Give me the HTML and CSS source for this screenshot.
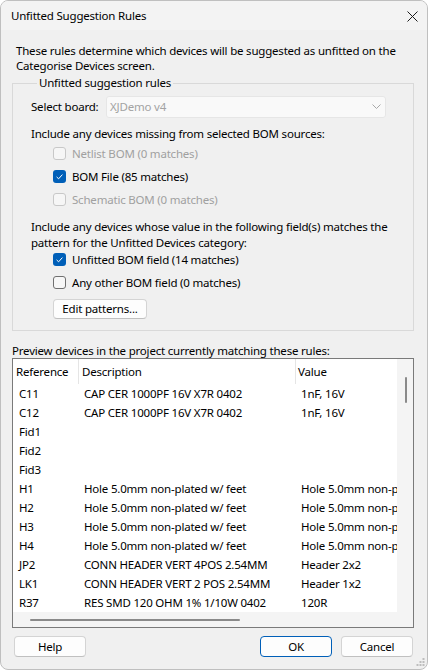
FILE: index.html
```html
<!DOCTYPE html>
<html lang="en">
<head>
<meta charset="utf-8">
<title>Unfitted Suggestion Rules</title>
<link rel="stylesheet" href="styles.css">
</head>
<body>
<div class="window">
  <div class="titlebar">
    <span class="title">Unfitted Suggestion Rules</span>
    <svg class="close" width="11" height="11" viewBox="0 0 11 11"><path d="M0.5 0.5 L10.5 10.5 M10.5 0.5 L0.5 10.5" stroke="#1b1b1b" stroke-width="1" fill="none"/></svg>
  </div>
  <div class="content">
    <p class="intro">These rules determine which devices will be suggested as unfitted on the<br>Categorise Devices screen.</p>
    <fieldset class="group">
      <legend>Unfitted suggestion rules</legend>
      <div class="board-row">
        <span class="board-label">Select board:</span>
        <div class="select">
          <span>XJDemo v4</span>
          <svg width="9" height="5" viewBox="0 0 9 5"><path d="M0.5 0.5 L4.5 4.5 L8.5 0.5" stroke="#a8a8a8" stroke-width="1" fill="none"/></svg>
        </div>
      </div>
      <p class="section s1">Include any devices missing from selected BOM sources:</p>
      <div class="checks">
        <div class="check disabled"><span class="box"></span><span>Netlist BOM (0 matches)</span></div>
        <div class="check"><span class="box on"><svg width="13" height="13" viewBox="0 0 13 13"><path d="M3.6 6.9 L5.6 8.8 L9.4 4.6" stroke="#fff" stroke-width="1" fill="none"/></svg></span><span>BOM File (85 matches)</span></div>
        <div class="check disabled"><span class="box"></span><span>Schematic BOM (0 matches)</span></div>
      </div>
      <p class="section s2">Include any devices whose value in the following field(s) matches the<br>pattern for the Unfitted Devices category:</p>
      <div class="checks c2">
        <div class="check"><span class="box on"><svg width="13" height="13" viewBox="0 0 13 13"><path d="M3.6 6.9 L5.6 8.8 L9.4 4.6" stroke="#fff" stroke-width="1" fill="none"/></svg></span><span>Unfitted BOM field (14 matches)</span></div>
        <div class="check"><span class="box off"></span><span>Any other BOM field (0 matches)</span></div>
      </div>
      <button class="btn edit">Edit patterns...</button>
    </fieldset>
    <p class="preview-label">Preview devices in the project currently matching these rules:</p>
    <div class="list">
      <div class="viewport">
        <div class="row head">
          <span>Reference</span><span>Description</span><span>Value</span>
        </div>
        <div class="row"><span>C11</span><span>CAP CER 1000PF 16V X7R 0402</span><span>1nF, 16V</span></div>
        <div class="row"><span>C12</span><span>CAP CER 1000PF 16V X7R 0402</span><span>1nF, 16V</span></div>
        <div class="row"><span>Fid1</span><span></span><span></span></div>
        <div class="row"><span>Fid2</span><span></span><span></span></div>
        <div class="row"><span>Fid3</span><span></span><span></span></div>
        <div class="row"><span>H1</span><span>Hole 5.0mm non-plated w/ feet</span><span>Hole 5.0mm non-plated w/ feet</span></div>
        <div class="row"><span>H2</span><span>Hole 5.0mm non-plated w/ feet</span><span>Hole 5.0mm non-plated w/ feet</span></div>
        <div class="row"><span>H3</span><span>Hole 5.0mm non-plated w/ feet</span><span>Hole 5.0mm non-plated w/ feet</span></div>
        <div class="row"><span>H4</span><span>Hole 5.0mm non-plated w/ feet</span><span>Hole 5.0mm non-plated w/ feet</span></div>
        <div class="row"><span>JP2</span><span>CONN HEADER VERT 4POS 2.54MM</span><span>Header 2x2</span></div>
        <div class="row"><span>LK1</span><span>CONN HEADER VERT 2 POS 2.54MM</span><span>Header 1x2</span></div>
        <div class="row"><span>R37</span><span>RES SMD 120 OHM 1% 1/10W 0402</span><span>120R</span></div>
      </div>
      <div class="vscroll"><span class="vthumb"></span></div>
      <div class="hscroll"><span class="hthumb"></span></div>
      <div class="corner"></div>
    </div>
    <div class="buttons">
      <button class="btn">Help</button>
      <span class="spacer"></span>
      <button class="btn ok">OK</button>
      <button class="btn">Cancel</button>
    </div>
  </div>
  <svg class="grip" width="10" height="9" viewBox="0 0 10 9">
    <rect x="7.5" y="0" width="2" height="2" fill="#bdbdbd"/>
    <rect x="4.5" y="3" width="2" height="2" fill="#bdbdbd"/>
    <rect x="7.5" y="3" width="2" height="2" fill="#bdbdbd"/>
    <rect x="1.5" y="6" width="2" height="2" fill="#bdbdbd"/>
    <rect x="4.5" y="6" width="2" height="2" fill="#bdbdbd"/>
    <rect x="7.5" y="6" width="2" height="2" fill="#bdbdbd"/>
  </svg>
</div>
</body>
</html>
```

FILE: styles.css
```css
* { box-sizing: border-box; }
html, body { margin: 0; padding: 0; background: #ffffff; }
body {
  font-family: "Noto Sans", "Open Sans", sans-serif;
  font-size: 11.5px;
  letter-spacing: -0.2px;
  line-height: 16px;
  color: #000;
}
p { margin: 0; white-space: nowrap; }

.window {
  position: relative;
  width: 428px;
  height: 670px;
  border: 1px solid #bfbfbf;
  border-radius: 8px;
  background: #f0f0f0;
  display: flex;
  flex-direction: column;
  overflow: hidden;
}

.titlebar {
  height: 29px;
  flex: none;
  display: flex;
  align-items: center;
  justify-content: space-between;
  padding: 0 9px 0 10px;
  background: #f3f3f3;
}
.title { padding-top: 1px; }
.close { display: block; margin-top: 2px; }

.content {
  flex: 1;
  display: flex;
  flex-direction: column;
  padding: 0 13px 0 11px;
}

.intro {
  margin-top: 13px;
  padding-left: 4px;
  line-height: 15px;
}

.group {
  margin: 2px 0 0 0;
  padding: 5px 8px 11px 18px;
  border: 1px solid #d9d9d9;
  display: flex;
  flex-direction: column;
  align-items: flex-start;
  min-width: 0;
}
.group legend {
  margin-left: 6px;
  padding: 0 2px;
  line-height: 16px;
}

.board-row {
  display: flex;
  align-items: center;
  width: 100%;
}
.board-label { width: 75px; flex: none; }
.select {
  width: 280px;
  height: 22px;
  display: flex;
  align-items: center;
  justify-content: space-between;
  padding: 0 4px 0 3px;
  background: #f9f9f9;
  border: 1px solid #e6e6e6;
  border-radius: 3px;
  color: #a3a3a3;
}
.select svg { display: block; margin-top: -1px; }

.section.s1 { margin-top: 8px; }
.section.s2 { margin-top: 8px; }

.checks {
  margin-top: 0;
  padding-left: 22px;
  display: flex;
  flex-direction: column;
}
.checks.c2 { margin-top: -3px; }
.check {
  height: 23px;
  display: flex;
  align-items: center;
  gap: 6px;
  white-space: nowrap;
}
.check.disabled { color: #a0a0a0; }
.box {
  width: 13px;
  height: 13px;
  border-radius: 3px;
  border: 1px solid #c8c8c8;
  background: #f6f6f6;
  flex: none;
  display: block;
  position: relative;
}
.box.off { border-color: #707070; background: #f7f7f7; }
.box.on { border: none; background: #005fb8; }
.box.on svg { display: block; }

.btn {
  font-family: inherit;
  font-size: 11.5px;
  letter-spacing: -0.2px;
  line-height: 16px;
  color: #000;
  background: #fdfdfd;
  border: 1px solid #d4d4d4;
  border-bottom-color: #c0c0c0;
  border-radius: 4px;
  padding: 0;
  height: 21px;
  width: 72px;
}
.btn.edit {
  margin-top: 5px;
  margin-left: 22px;
  width: 94px;
  height: 20px;
}
.btn.ok { border: 1px solid #005fb8; }

.preview-label {
  margin-top: 12px;
  line-height: 15px;
}

.list {
  height: 270px;
  flex: none;
  border: 1px solid #7a7a7a;
  display: grid;
  grid-template-columns: 1fr 16px;
  grid-template-rows: 1fr 15px;
  background: #fff;
}
.viewport {
  overflow: hidden;
  background: #fff;
  white-space: nowrap;
}
.row {
  display: grid;
  grid-template-columns: 66px 217px 160px;
  height: 19px;
  align-items: center;
}
.row span { overflow: hidden; padding-left: 6px; }
.row span + span { padding-left: 5px; }
.row.head { height: 25px; align-items: stretch; }
.row.head span {
  display: flex;
  align-items: center;
  padding-left: 3px;
  border-right: 1px solid #e5e5e5;
}
.row.head span:nth-child(2) { padding-left: 3px; }
.row.head span:nth-child(3) { padding-left: 2px; }

.vscroll {
  background: #f4f4f4;
  position: relative;
  display: flex;
  justify-content: center;
}
.vthumb {
  display: block;
  width: 2px;
  height: 26px;
  margin-top: 18px;
  margin-left: 1px;
  background: #8a8a8a;
  border-radius: 1px;
}
.hscroll {
  background: #f4f4f4;
  display: flex;
  align-items: center;
}
.hthumb {
  display: block;
  width: 210px;
  height: 2px;
  margin-left: 17px;
  margin-top: 1px;
  background: #8a8a8a;
  border-radius: 1px;
}
.corner { background: #f4f4f4; }

.buttons {
  margin-top: 8px;
  display: flex;
  gap: 9px;
  padding: 0 1px 0 2px;
}
.spacer { flex: 1; }

.grip {
  position: absolute;
  right: 2px;
  bottom: 2px;
}
```
